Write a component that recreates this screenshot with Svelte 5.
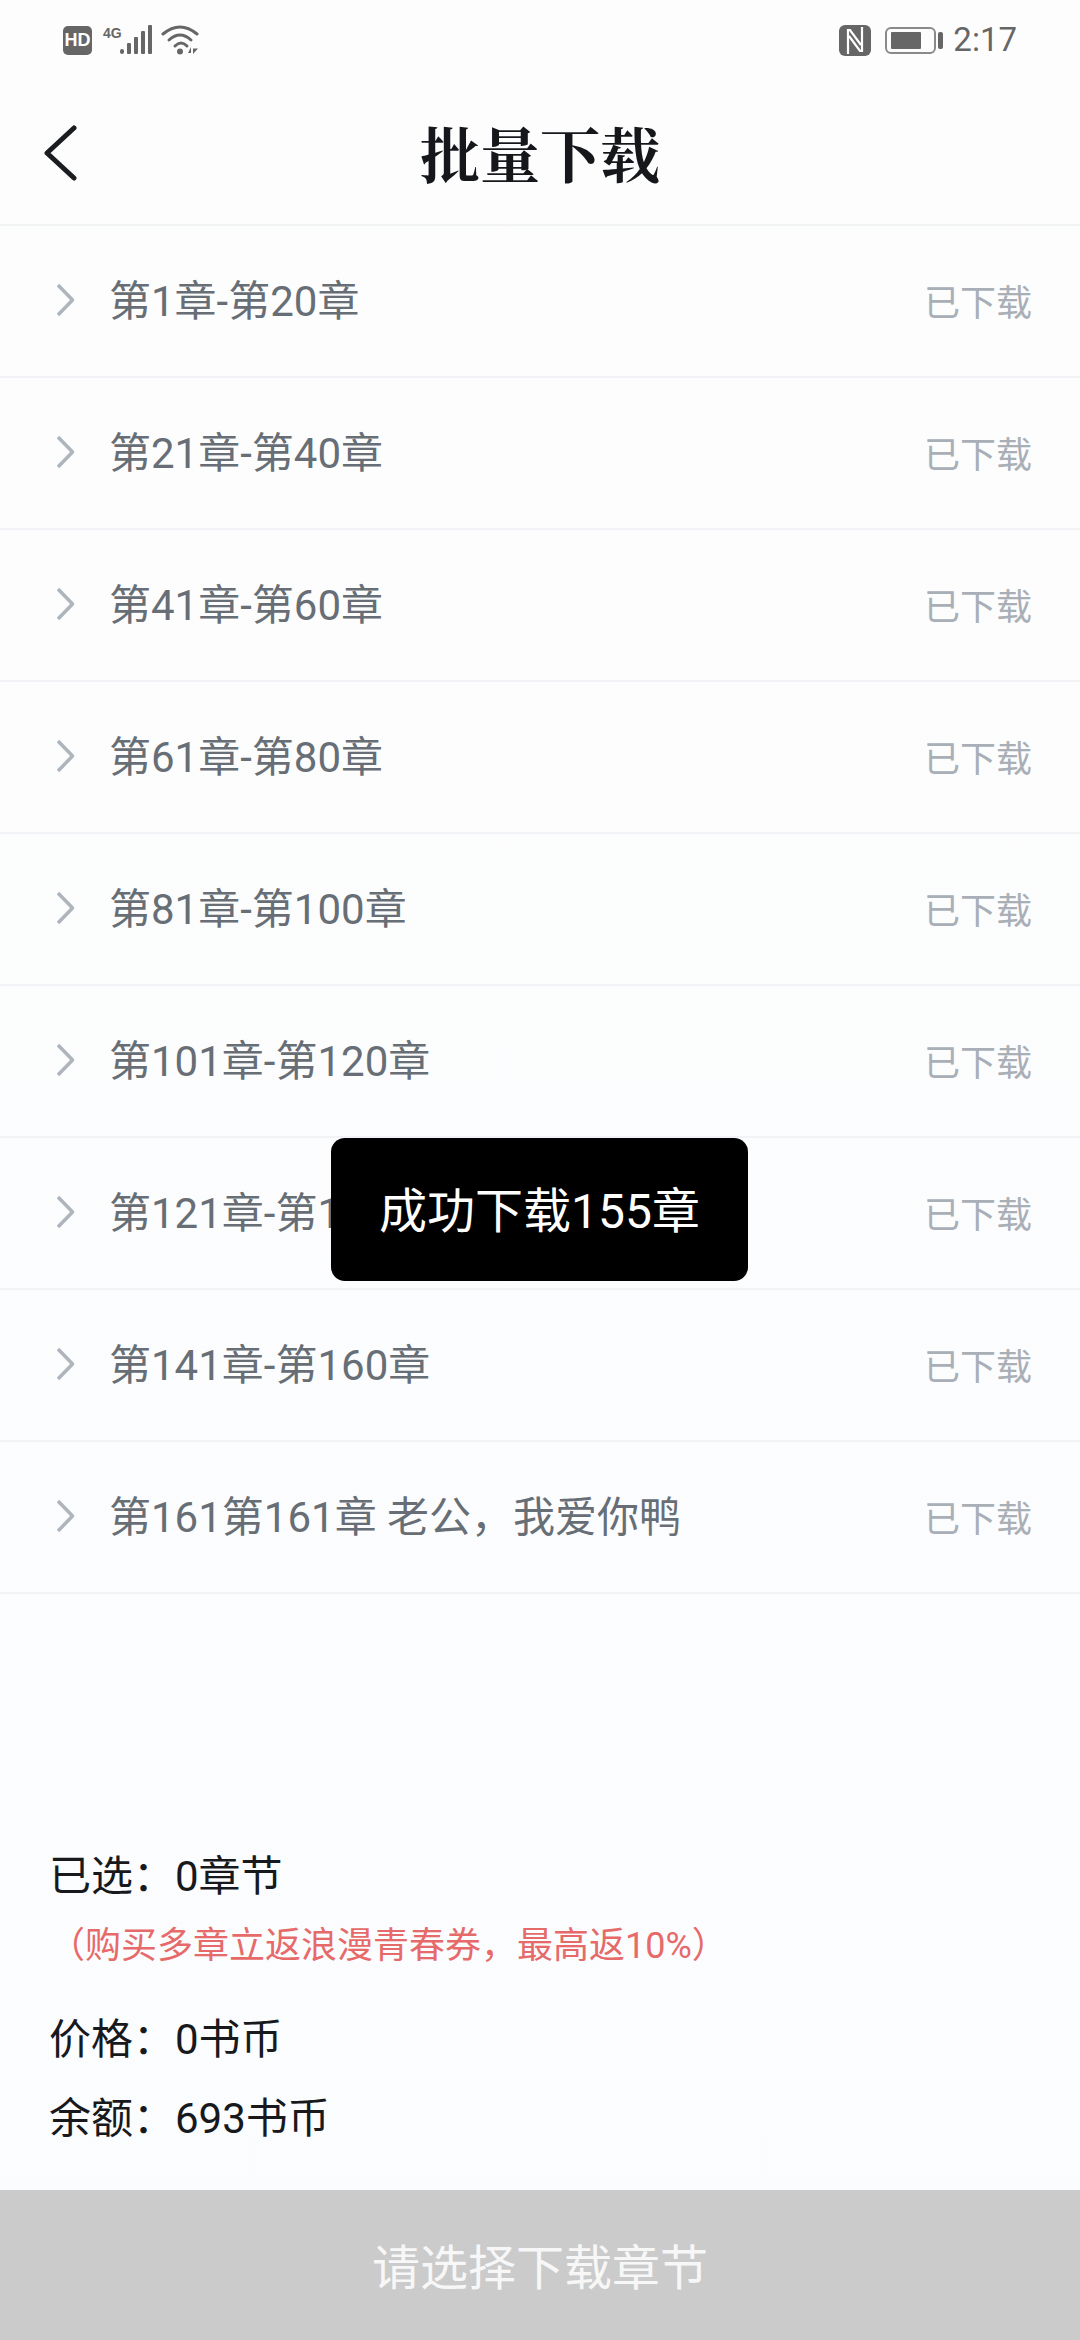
<script>
  const rows = [
    '第1章-第20章',
    '第21章-第40章',
    '第41章-第60章',
    '第61章-第80章',
    '第81章-第100章',
    '第101章-第120章',
    '第121章-第140章',
    '第141章-第160章',
    '第161第161章 老公，我爱你鸭'
  ];
</script>

<div class="page">
  <!-- Status bar -->
  <div class="status">
    <svg class="status-left" width="136" height="31" viewBox="63 25 136 31">
      <rect x="63" y="26" width="29" height="29" rx="5" fill="#666" />
      <text x="77.5" y="46" text-anchor="middle" class="hd">HD</text>
      <text x="103" y="38" class="four-g">4G</text>
      <rect x="120" y="49" width="4" height="5" rx="2" fill="#666" />
      <rect x="127" y="43" width="4" height="11" rx="1" fill="#666" />
      <rect x="134" y="37" width="4" height="17" rx="1" fill="#666" />
      <rect x="141" y="31" width="4" height="23" rx="1" fill="#666" />
      <rect x="148" y="25" width="4" height="29" rx="1" fill="#666" />
      <g fill="none" stroke="#666" stroke-width="3" stroke-linecap="round">
        <path d="M163 34 Q180 20 197 34" />
        <path d="M169 40 Q180 30 191 40" />
        <path d="M175 46 Q181 40 187 46" />
      </g>
      <circle cx="180" cy="51.5" r="3" fill="#666" />
      <path d="M188 53 L191 53 L191 47 Z M193 47 L193 54 L198 48.5 L193 48.5 Z" fill="#666" />
    </svg>
    <div class="status-right">
      <svg class="nfc" width="32" height="31" viewBox="0 0 32 31">
        <rect width="32" height="31" rx="6" fill="#666" />
        <path d="M9 29 V5 H11 L22 20" fill="none" stroke="#fff" stroke-width="2.2" />
        <path d="M23 2 V26 H21 L10 11" fill="none" stroke="#fff" stroke-width="2.2" />
      </svg>
      <div class="battery">
        <div class="battery-body"><div class="battery-level"></div></div>
        <div class="battery-nub"></div>
      </div>
      <span class="time">2:17</span>
    </div>
  </div>

  <!-- Header -->
  <header class="nav">
    <svg class="back" width="36" height="56" viewBox="0 0 36 56">
      <path d="M31 3 L4 28 L31 53" fill="none" stroke="#1a1c20" stroke-width="5" stroke-linecap="round" stroke-linejoin="round" />
    </svg>
    <h1>批量下载</h1>
  </header>

  <!-- Chapter ranges -->
  <ul class="list">
    {#each rows as row}
      <li class="row">
        <svg class="chevron" width="19" height="34" viewBox="0 0 19 34">
          <path d="M2 2 L16.5 17 L2 32" fill="none" stroke="#aeb5bc" stroke-width="3.5" stroke-linejoin="round" />
        </svg>
        <span class="name">{row}</span>
        <span class="state">已下载</span>
      </li>
    {/each}
  </ul>

  <!-- Summary -->
  <div class="summary">
    <p>已选：0章节</p>
    <p class="note">（购买多章立返浪漫青春券，最高返10%）</p>
    <p class="price">价格：0书币</p>
    <p class="balance">余额：693书币</p>
  </div>

  <button class="submit" type="button">请选择下载章节</button>

  <div class="toast">成功下载155章</div>
</div>

<style>
  :global(body) {
    margin: 0;
    background: #fcfcfe;
  }

  .page {
    position: relative;
    display: flex;
    flex-direction: column;
    width: 1080px;
    height: 2340px;
    overflow: hidden;
    background: linear-gradient(#fdfdfd, #fbfcfe);
    font-family: Roboto, "Noto Sans CJK SC", sans-serif;
  }

  /* Status bar */
  .status {
    display: flex;
    justify-content: space-between;
    align-items: center;
    height: 80px;
    padding: 0 63px;
    box-sizing: border-box;
  }

  .status-left {
    display: block;
  }

  .hd {
    font: 700 18px "Liberation Sans", sans-serif;
    fill: #fff;
  }

  .four-g {
    font: 700 14px "Liberation Sans", sans-serif;
    fill: #666;
  }

  .status-right {
    display: flex;
    align-items: center;
  }

  .nfc {
    margin-right: 14px;
  }

  .battery {
    display: flex;
    align-items: center;
    gap: 2px;
    margin-right: 10px;
  }

  .battery-body {
    width: 51px;
    height: 27px;
    padding: 3px 4px;
    box-sizing: border-box;
    border: 2px solid #8a8a8a;
    border-radius: 6px;
  }

  .battery-level {
    width: 30px;
    height: 100%;
    background: #666;
    border-radius: 1px;
  }

  .battery-nub {
    width: 5px;
    height: 17px;
    background: #666;
    border-radius: 2px;
  }

  .time {
    font-size: 33px;
    color: #666;
    line-height: 40px;
  }

  /* Header */
  .nav {
    position: relative;
    display: flex;
    align-items: center;
    justify-content: center;
    height: 146px;
    box-sizing: border-box;
    border-bottom: 2px solid #f2f3f5;
  }

  .back {
    position: absolute;
    left: 43px;
    top: 45px;
  }

  h1 {
    margin: 0;
    font-family: "Noto Serif CJK SC", "Noto Sans CJK SC", serif;
    font-size: 60px;
    font-weight: 700;
    color: #15171a;
  }

  /* Chapter ranges */
  .list {
    margin: 0;
    padding: 0;
    list-style: none;
  }

  .row {
    display: flex;
    align-items: center;
    height: 152px;
    padding: 0 48px 0 56px;
    box-sizing: border-box;
    border-bottom: 2px solid #f2f3f6;
  }

  .chevron {
    flex: none;
    margin: 0 34px 2px 0;
  }

  .name {
    flex: 1;
    font-size: 42px;
    color: #676e75;
    padding-bottom: 8px;
  }

  .state {
    font-size: 36px;
    color: #a9afb7;
    padding-bottom: 3px;
  }

  /* Summary */
  .summary {
    margin-top: auto;
    padding: 0 49px 41px;
    font-size: 42px;
    color: #17191c;
  }

  .summary p {
    margin: 0;
    line-height: 60px;
  }

  .summary .note {
    margin-top: 9px;
    font-size: 36px;
    color: #e66a6a;
  }

  .summary .price {
    margin-top: 34px;
  }

  .summary .balance {
    margin-top: 19px;
  }

  .submit {
    flex: none;
    height: 150px;
    border: 0;
    padding: 0 0 3px;
    background: #cbcbcb;
    font-family: inherit;
    font-size: 48px;
    color: #f7f7f7;
  }

  /* Toast */
  .toast {
    position: absolute;
    left: 331px;
    top: 1138px;
    width: 417px;
    height: 143px;
    padding-bottom: 6px;
    box-sizing: border-box;
    display: flex;
    align-items: center;
    justify-content: center;
    background: #000;
    border-radius: 14px;
    font-size: 48px;
    color: #fff;
  }
</style>
